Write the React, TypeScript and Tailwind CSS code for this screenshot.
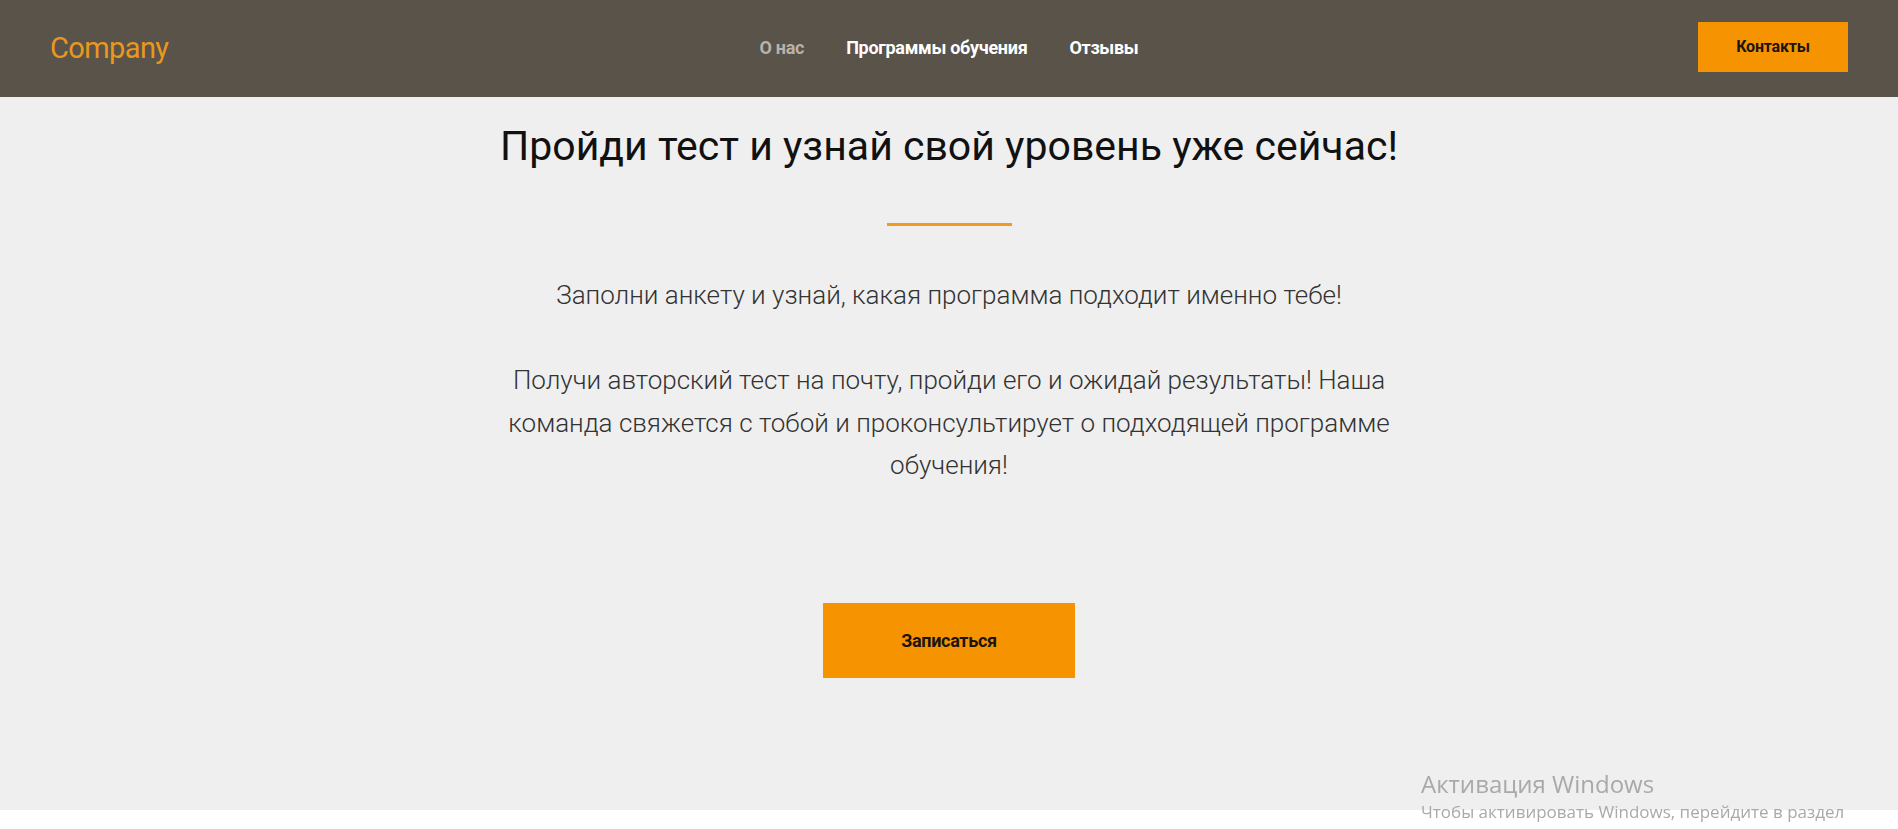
import React from "react";

const nav = [
  { label: "О нас", active: true },
  { label: "Программы обучения", active: false },
  { label: "Отзывы", active: false },
];

function Header() {
  return (
    <header className="grid h-[97px] grid-cols-[1fr_auto_1fr] items-center bg-[#5a5349] px-[50px]">
      <a href="#" className="text-[29px] leading-none tracking-[-0.6px] text-[#e9981d]">
        Company
      </a>
      <nav className="flex items-center gap-[42px] pb-[2px]">
        {nav.map((item) => (
          <a
            key={item.label}
            href="#"
            className={`text-[18px] font-bold tracking-[-0.3px] ${
              item.active ? "text-[#b9b2aa]" : "text-white"
            }`}
          >
            {item.label}
          </a>
        ))}
      </nav>
      <div className="flex justify-end">
        <button className="mb-[3px] h-[50px] w-[150px] bg-[#f59400] text-[16px] font-bold tracking-[-0.2px] text-[#1b1510]">
          Контакты
        </button>
      </div>
    </header>
  );
}

export default function App() {
  return (
    <div className="relative min-h-[829px] bg-white font-['Roboto','Noto_Sans',sans-serif]">
      <Header />
      <main className="flex h-[713px] flex-col items-center bg-[#efefef] pt-[25px] text-center">
        <h1 className="text-[41px] font-normal leading-[48px] text-[#111]">
          Пройди тест и узнай свой уровень уже сейчас!
        </h1>
        <span className="mt-[53px] block h-[3px] w-[125px] bg-[#f29a1e]" />
        <p className="mt-[48px] text-[26px] font-light leading-[42.5px] text-[#333]">
          Заполни анкету и узнай, какая программа подходит именно тебе!
        </p>
        <p className="mt-[42.5px] text-[26px] font-light leading-[42.5px] text-[#333]">
          Получи авторский тест на почту, пройди его и ожидай результаты! Наша
          <br />
          команда свяжется с тобой и проконсультирует о подходящей программе
          <br />
          обучения!
        </p>
        <button className="mt-[116px] h-[75px] w-[252px] bg-[#f59400] text-[18px] font-bold tracking-[-0.3px] text-[#1b1510]">
          Записаться
        </button>
      </main>
      <div className="pointer-events-none fixed left-[1421px] top-[768px] font-['Open_Sans','Noto_Sans',sans-serif] text-[#a9a9a9]">
        <div className="text-[24px] leading-[32px]">Активация Windows</div>
        <div className="text-[17px] leading-[24px]">
          Чтобы активировать Windows, перейдите в раздел
        </div>
      </div>
    </div>
  );
}
